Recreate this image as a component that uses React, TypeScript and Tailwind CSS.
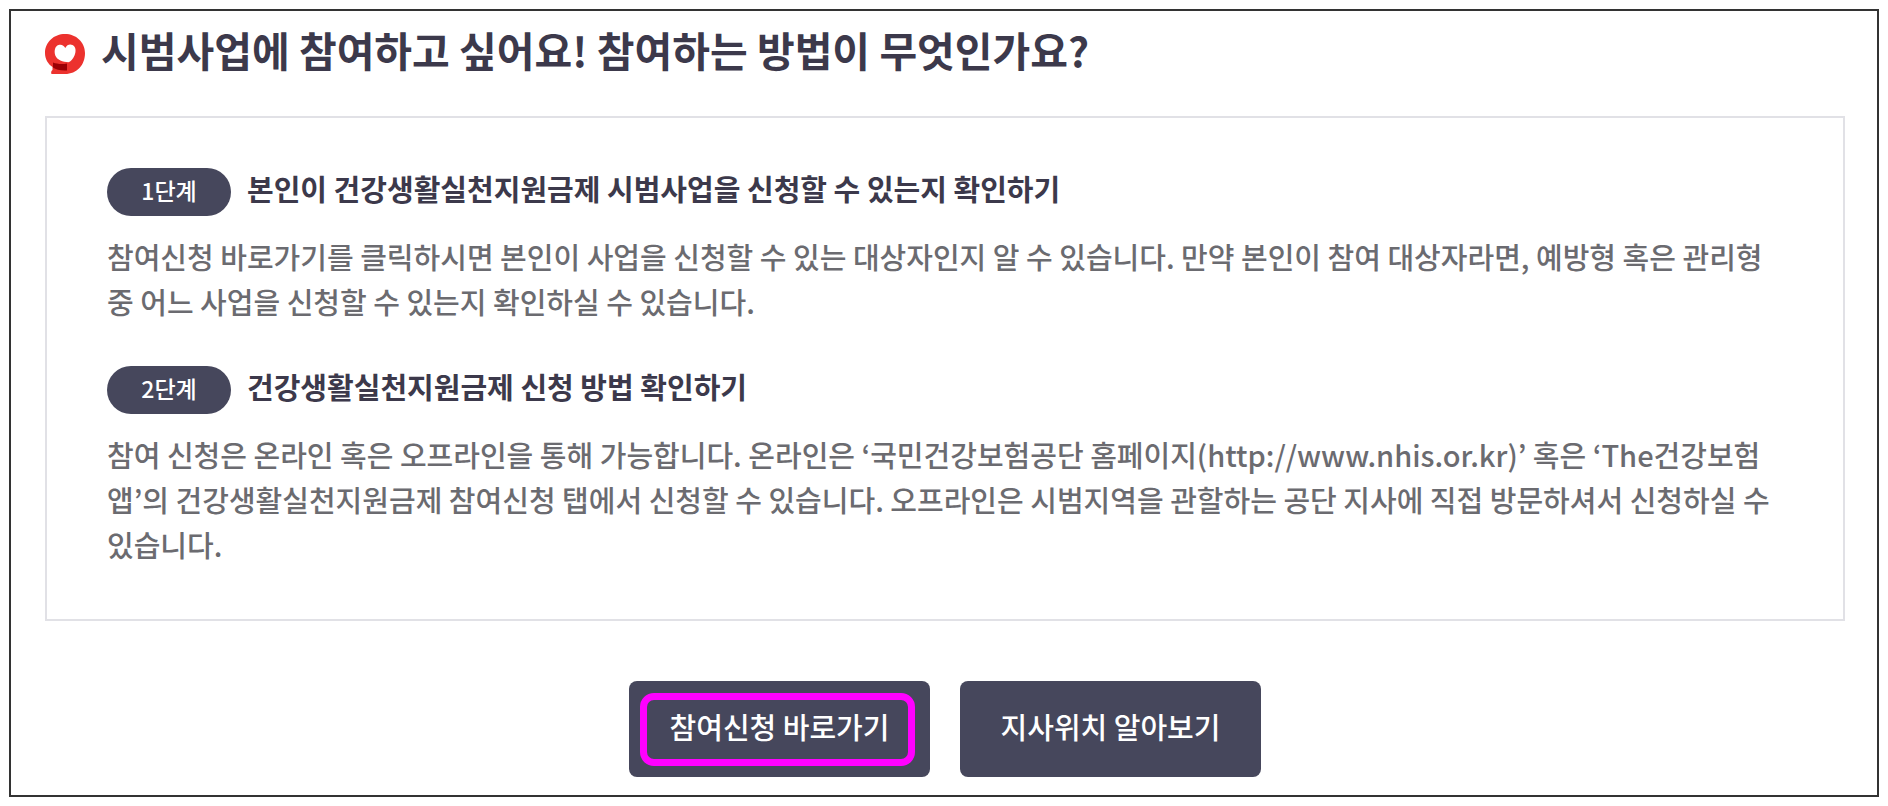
import type { ReactNode } from "react";

function HeartMark() {
  return (
    <svg viewBox="0 0 40 40" aria-hidden="true" className="size-10 shrink-0">
      <path
        fill="#ec322e"
        d="M20 0C31 0 40 8 40 19C40 31 32 40 20 40H6.500C5.800 38.500 6.200 37 7.500 36V33C3 30 0 25 0 19C0 8 9 0 20 0Z"
      />
      <path fill="#9b0005" d="M8 28.500C12 30 17 30.500 22 29.500V36.500C16 37 11 35.500 8 33.500Z" />
      <path
        fill="#fff"
        d="M20.300 14C22 10.500 25 9.800 27.500 11C31 12.500 31.300 17.500 29.500 21.500C28 25 25.500 27.500 23.500 28.300C18 28 12 26 10.300 21.500C8.800 17 10 12 13.500 11C16.500 10 19 11.500 20.300 14Z"
      />
    </svg>
  );
}

function Step({ label, title, children }: { label: string; title: string; children: ReactNode }) {
  return (
    <section>
      <div className="flex h-12 items-center gap-4">
        <span className="flex h-12 w-31 shrink-0 items-center justify-center rounded-full bg-[#46475c] pb-1 text-[23px] font-medium text-white">
          {label}
        </span>
        <h3 className="pb-2 text-[29px] leading-[44px] font-bold">{title}</h3>
      </div>
      <p className="mt-[18px] text-[29px] leading-[45px] font-medium text-[#6b6b70]">{children}</p>
    </section>
  );
}

function ActionLink({ href, marked, children }: { href: string; marked?: boolean; children: ReactNode }) {
  return (
    <a
      href={href}
      className="relative flex h-24 w-[301px] items-center justify-center rounded-lg bg-[#46475c] pb-1 text-[29px] font-medium text-white"
    >
      {children}
      {marked ? (
        <span className="absolute top-3 right-[15px] bottom-[11px] left-[11px] rounded-[14px] border-[7px] border-[#ff00ff]" />
      ) : null}
    </a>
  );
}

export default function App() {
  return (
    <main className="m-[9px] border-2 border-[#333] bg-white pr-8 pb-[18px] pl-[34px] font-['Noto_Sans_CJK_KR',sans-serif] break-keep text-[#3c394b]">
      <header className="flex items-start gap-4 pt-2">
        <div className="pt-[15px]">
          <HeartMark />
        </div>
        <h2 className="text-[41px] leading-[60px] font-bold">
          시범사업에 참여하고 싶어요! 참여하는 방법이 무엇인가요?
        </h2>
      </header>

      <div className="mt-[37px] flex flex-col gap-[42px] border-2 border-[#e1e1e6] px-[60px] pt-[50px] pb-[52px]">
        <Step label="1단계" title="본인이 건강생활실천지원금제 시범사업을 신청할 수 있는지 확인하기">
          참여신청 바로가기를 클릭하시면 본인이 사업을 신청할 수 있는 대상자인지 알 수 있습니다. 만약
          본인이 참여 대상자라면, 예방형 혹은 관리형 중 어느 사업을 신청할 수 있는지 확인하실 수
          있습니다.
        </Step>
        <Step label="2단계" title="건강생활실천지원금제 신청 방법 확인하기">
          참여 신청은 온라인 혹은 오프라인을 통해 가능합니다. 온라인은 ‘국민건강보험공단
          홈페이지(http://www.nhis.or.kr)’ 혹은 ‘The건강보험 앱’의 건강생활실천지원금제 참여신청
          탭에서 신청할 수 있습니다. 오프라인은 시범지역을 관할하는 공단 지사에 직접 방문하셔서
          신청하실 수 있습니다.
        </Step>
      </div>

      <nav className="mt-[60px] flex justify-center gap-[30px]">
        <ActionLink href="#apply" marked>
          참여신청 바로가기
        </ActionLink>
        <ActionLink href="#branches">지사위치 알아보기</ActionLink>
      </nav>
    </main>
  );
}
